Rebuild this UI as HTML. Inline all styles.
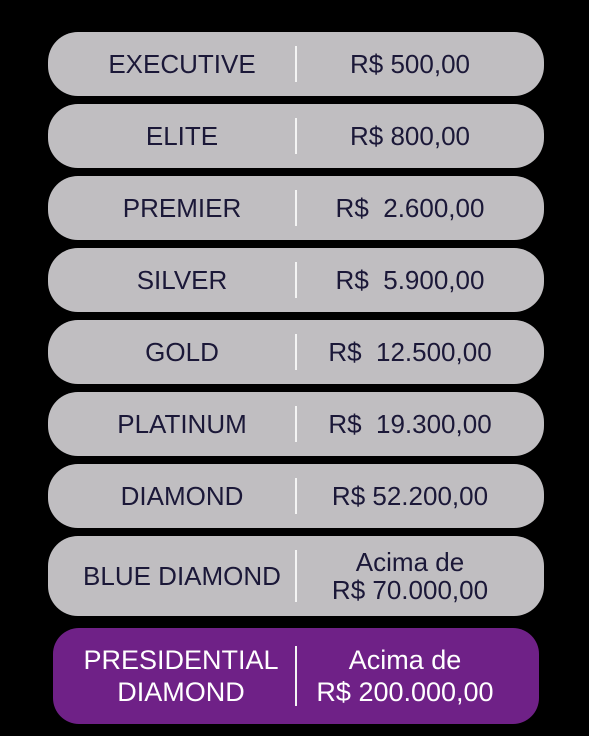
<!DOCTYPE html>
<html><head><meta charset="utf-8"><style>
html,body{margin:0;padding:0;background:#000;width:589px;height:736px;overflow:hidden;font-family:"Liberation Sans","DejaVu Sans",sans-serif;}
.r{position:absolute;left:48px;width:496px;background:#c0bec1;border-radius:30px;color:#1b1838;font-size:26px;}
.r .l,.r .v{position:absolute;top:0;bottom:0;display:flex;align-items:center;justify-content:center;text-align:center;line-height:28px;white-space:nowrap;}
.r .l{left:10px;width:248px;}
.r .v{left:252px;width:220px;}
.r .d{position:absolute;left:247px;width:2px;top:14px;bottom:14px;background:#f4f4f4;}
.p{background:#6f2187;color:#fff;left:53px;width:486px;border-radius:26px;font-size:27px;}
.p .l{left:6px;width:244px;line-height:32px}.p .v{left:242px;width:220px;line-height:32px}.p .d{left:242px;top:18px;bottom:18px}
</style></head><body>
<div class="r" style="top:32px;height:64px"><div class="l">EXECUTIVE</div><div class="d"></div><div class="v">R$ 500,00</div></div>
<div class="r" style="top:104px;height:64px"><div class="l">ELITE</div><div class="d"></div><div class="v">R$ 800,00</div></div>
<div class="r" style="top:176px;height:64px"><div class="l">PREMIER</div><div class="d"></div><div class="v">R$&nbsp; 2.600,00</div></div>
<div class="r" style="top:248px;height:64px"><div class="l">SILVER</div><div class="d"></div><div class="v">R$&nbsp; 5.900,00</div></div>
<div class="r" style="top:320px;height:64px"><div class="l">GOLD</div><div class="d"></div><div class="v">R$&nbsp; 12.500,00</div></div>
<div class="r" style="top:392px;height:64px"><div class="l">PLATINUM</div><div class="d"></div><div class="v">R$&nbsp; 19.300,00</div></div>
<div class="r" style="top:464px;height:64px"><div class="l">DIAMOND</div><div class="d"></div><div class="v">R$ 52.200,00</div></div>
<div class="r" style="top:536px;height:80px"><div class="l">BLUE DIAMOND</div><div class="d"></div><div class="v">Acima de<br>R$ 70.000,00</div></div>
<div class="r p" style="top:628px;height:96px"><div class="l">PRESIDENTIAL<br>DIAMOND</div><div class="d"></div><div class="v">Acima de<br>R$ 200.000,00</div></div>
</body></html>
